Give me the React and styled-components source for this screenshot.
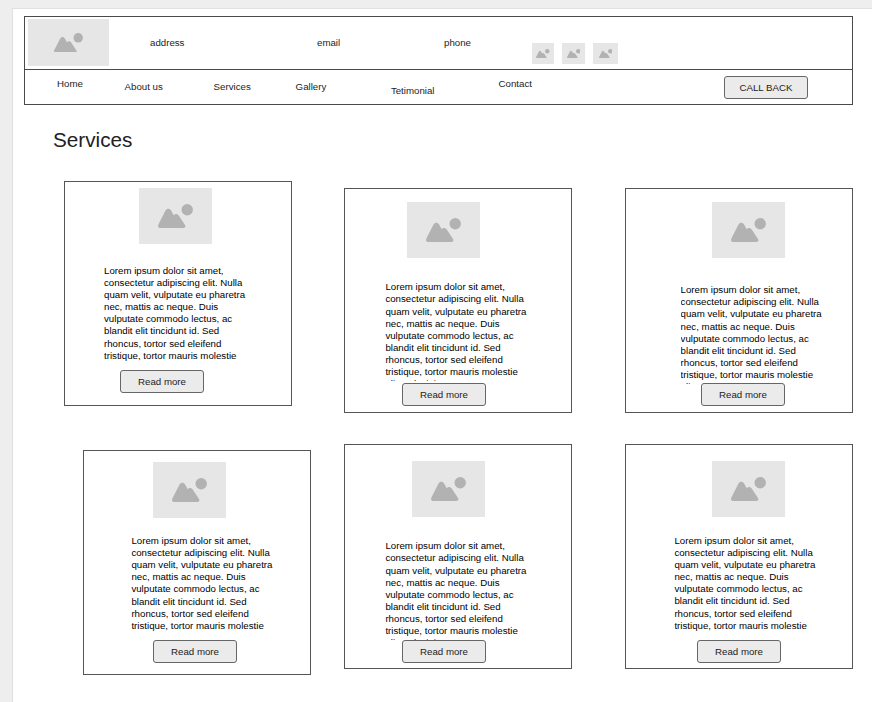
import React from 'react';
import styled, { createGlobalStyle } from 'styled-components';

const GlobalStyle = createGlobalStyle`
  * { box-sizing: border-box; }
  body {
    margin: 0;
    background: #eee;
    color: #1c1c1c;
    font-family: "Liberation Sans", Arial, sans-serif;
    font-size: 9.7px;
    overflow: hidden;
  }
`;

const Canvas = styled.div`
  height: 702px;
  padding: 8px 0 0 12px;
  overflow: hidden;
`;

const Page = styled.main`
  height: 694px;
  padding: 7px 0 0 11px;
  background: #fff;
  border-top: 1px solid #e0e0e0;
  border-left: 1px solid #e0e0e0;
`;

const Header = styled.header`
  width: 829px;
  height: 89px;
  border: 1px solid #4a4a4a;
`;

const TopBar = styled.div`
  display: grid;
  grid-template-columns: 122px 167px 127px 88px auto;
  height: 53px;
  padding: 2px 0 0 3px;
  border-bottom: 1px solid #4a4a4a;
`;

const ContactText = styled.span`
  margin-top: 18px;
  line-height: 12px;
`;

const SocialIcons = styled.div`
  display: flex;
  gap: 8px;
  margin-top: 24px;
`;

const Nav = styled.nav`
  display: grid;
  grid-template-columns: 67.6px 89px 82px 95.3px 107.7px 225.4px auto;
  height: 34px;
  padding-left: 32px;
`;

const NavLink = styled.a`
  margin-top: ${(p) => p.$top}px;
  line-height: 12px;
`;

const Button = styled.button`
  display: block;
  flex: none;
  width: 84px;
  height: 23px;
  padding: 0;
  border: 1px solid #666;
  border-radius: 3px;
  background: #ebebeb;
  color: #222;
  font: inherit;
  line-height: 21px;
  text-align: center;
`;

const CallButton = styled(Button)`
  margin-top: 6px;
`;

const Title = styled.h1`
  margin: 23px 0 0 29px;
  font-size: 20.7px;
  font-weight: 400;
  line-height: 24px;
  color: #222;
`;

const CardGrid = styled.section`
  display: grid;
  grid-template-columns: 280px 281px 228px;
  grid-template-rows: 263px 230px;
  margin: 29px 0 0 40px;
`;

const Card = styled.article`
  display: flex;
  flex-direction: column;
  align-items: flex-start;
  width: 228px;
  height: 225px;
  margin: ${(p) => p.$top}px 0 0 ${(p) => p.$left}px;
  border: 1px solid #555;
`;

const Placeholder = styled.div`
  display: flex;
  flex: none;
  align-items: center;
  justify-content: center;
  width: ${(p) => p.$w}px;
  height: ${(p) => p.$h}px;
  background: #e6e6e6;
`;

const CardImage = styled(Placeholder)`
  margin: ${(p) => p.$top}px 0 0 ${(p) => p.$left}px;
`;

const Blurb = styled.p`
  flex: none;
  width: 146px;
  height: ${(p) => p.$h}px;
  margin: ${(p) => p.$top}px 0 0 ${(p) => p.$left}px;
  overflow: hidden;
  line-height: 12.14px;
  color: #000;
`;

const CardButton = styled(Button)`
  margin: ${(p) => p.$top}px 0 0 ${(p) => p.$left}px;
`;

function Picture({ width }) {
  return (
    <svg width={width} height={(width * 24) / 35} viewBox="0 0 35 24" fill="#b2b2b2">
      <circle cx="29.2" cy="5.8" r="5.7" />
      <path d="M2.6 24 C.3 24 -.6 22.3 .5 20.2 L7.5 6.6 C8.9 4.1 11.7 4.1 13.1 6.6 L15.7 11.2 C16.9 9.6 19.5 9.6 20.9 11.8 L27 21 C28 22.7 27.1 24 25.2 24 Z" />
    </svg>
  );
}

const NAV = [
  { label: 'Home', top: 8 },
  { label: 'About us', top: 11 },
  { label: 'Services', top: 11 },
  { label: 'Gallery', top: 11 },
  { label: 'Tetimonial', top: 15 },
  { label: 'Contact', top: 8 },
];

const LOREM =
  'Lorem ipsum dolor sit amet, consectetur adipiscing elit. Nulla quam velit, vulputate eu pharetra nec, mattis ac neque. Duis vulputate commodo lectus, ac blandit elit tincidunt id. Sed rhoncus, tortor sed eleifend tristique, tortor mauris molestie elit, et lacinia';

// card: [left, top] in its grid cell; the parts: [left, gap above]; textHeight clips the last line
const CARDS = [
  { card: [0, 0], image: [74.4, 6.4], text: [39, 20.4], textHeight: 99.2, button: [55, 6] },
  { card: [0, 7], image: [62, 13], text: [40.4, 23.3], textHeight: 99.7, button: [57, 2] },
  { card: [0, 7], image: [85.5, 13], text: [54.6, 26.1], textHeight: 99.9, button: [75, -1] },
  { card: [19, 6], image: [69, 10.5], text: [47.4, 17.3], textHeight: 98.7, button: [69, 6.5] },
  { card: [0, 0], image: [67, 16.4], text: [40.4, 22.9], textHeight: 99.7, button: [57, 0] },
  { card: [0, 0], image: [85.5, 16.4], text: [48.4, 17.4], textHeight: 98.7, button: [71, 6.5] },
];

export default function App() {
  return (
    <Canvas>
      <GlobalStyle />
      <Page>
        <Header>
          <TopBar>
            <Placeholder $w={81} $h={47}>
              <Picture width={29} />
            </Placeholder>
            <ContactText>address</ContactText>
            <ContactText>email</ContactText>
            <ContactText>phone</ContactText>
            <SocialIcons>
              {[22, 23, 25].map((w) => (
                <Placeholder key={w} $w={w} $h={21}>
                  <Picture width={13.5} />
                </Placeholder>
              ))}
            </SocialIcons>
          </TopBar>
          <Nav>
            {NAV.map((item) => (
              <NavLink key={item.label} $top={item.top}>
                {item.label}
              </NavLink>
            ))}
            <CallButton>CALL BACK</CallButton>
          </Nav>
        </Header>
        <Title>Services</Title>
        <CardGrid>
          {CARDS.map(({ card, image, text, textHeight, button }, i) => (
            <Card key={i} $left={card[0]} $top={card[1]}>
              <CardImage $w={73} $h={56} $left={image[0]} $top={image[1]}>
                <Picture width={35} />
              </CardImage>
              <Blurb $left={text[0]} $top={text[1]} $h={textHeight}>
                {LOREM}
              </Blurb>
              <CardButton $left={button[0]} $top={button[1]}>
                Read more
              </CardButton>
            </Card>
          ))}
        </CardGrid>
      </Page>
    </Canvas>
  );
}
